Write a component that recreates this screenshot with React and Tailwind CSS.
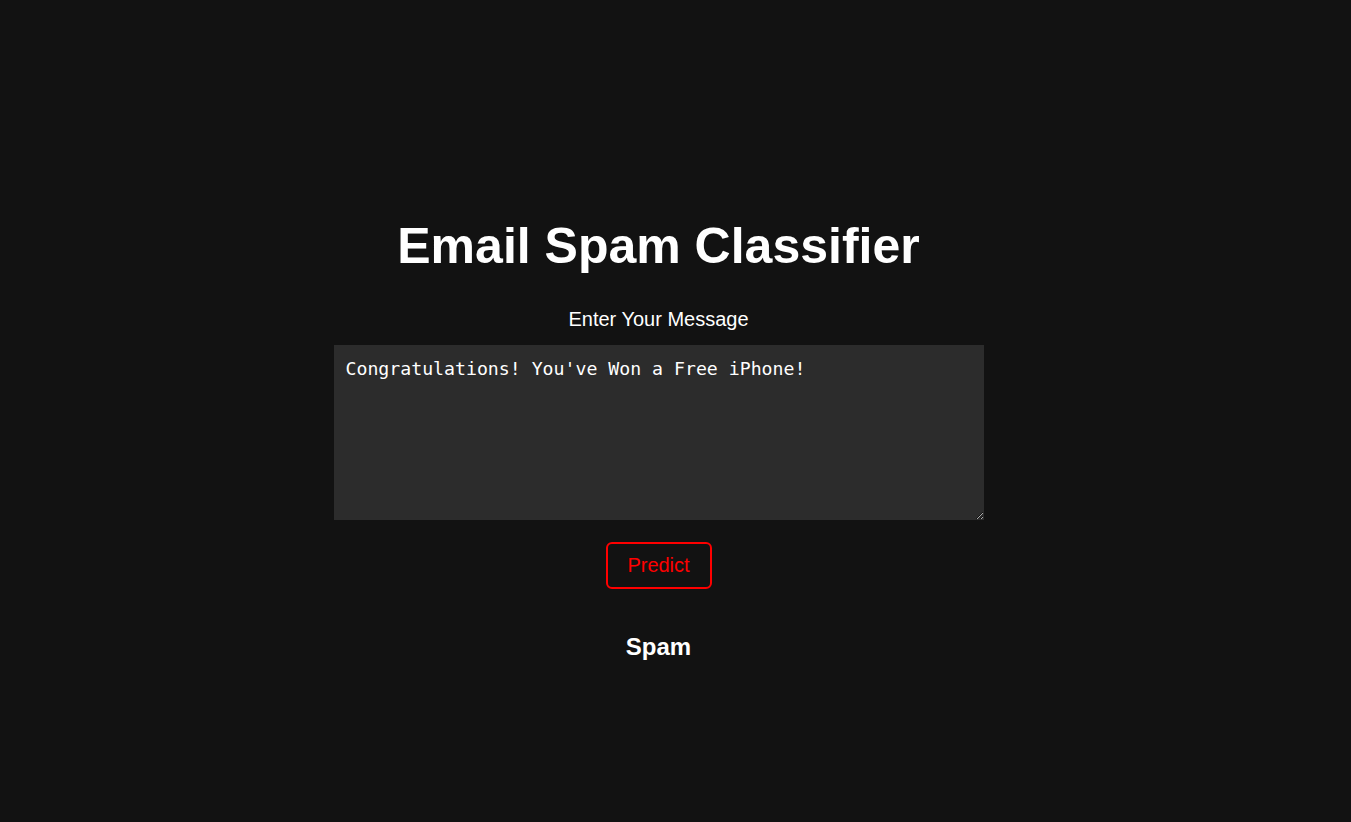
import React, { useState } from 'react';

const App = () => {
  const [message, setMessage] = useState("Congratulations! You've Won a Free iPhone!");

  return (
    <div className="min-h-screen w-full bg-[#121212] text-white flex flex-col items-center pt-[218px] pr-[34px] font-['Liberation_Sans',Arial,sans-serif]">
      <h1 className="text-[50px] leading-[57px] font-bold">Email Spam Classifier</h1>

      <label htmlFor="msg" className="mt-[33px] text-[20px] leading-[23px]">
        Enter Your Message
      </label>

      <textarea
        id="msg"
        value={message}
        onChange={(e) => setMessage(e.target.value)}
        className="mt-[14px] w-[650px] h-[175px] bg-[#2c2c2c] text-white px-3 pt-[13px] pb-[10px] text-[18.2px] leading-[22px] font-['DejaVu_Sans_Mono',monospace] outline-none border-0 resize"
      />

      <button className="mt-[22px] w-[106px] h-[47px] border-2 border-[#ff0000] rounded-md text-[#ff0000] text-[20px] leading-[23px] bg-transparent">
        Predict
      </button>

      <h2 className="mt-[44px] text-[24px] leading-[28px] font-bold">Spam</h2>
    </div>
  );
};

export default App;
